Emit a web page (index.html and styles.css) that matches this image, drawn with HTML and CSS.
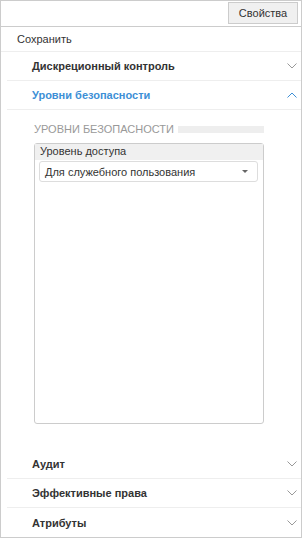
FILE: index.html
```html
<!DOCTYPE html>
<html lang="ru">
<head>
  <meta charset="UTF-8" />
  <title>Свойства</title>
  <link rel="stylesheet" href="styles.css">
</head>
<body>
  <div class="panel">
    <div class="toolbar">
      <button class="btn">Свойства</button>
    </div>
    <div class="save">Сохранить</div>

    <div class="section">
      <div class="section-head">
        <span>Дискреционный контроль</span>
        <svg class="chev" width="10" height="6" viewBox="0 0 10 6"><path d="M0.5 0.5 L5 5 L9.5 0.5" fill="none" stroke="#999" stroke-width="1"/></svg>
      </div>
    </div>

    <div class="section open">
      <div class="section-head">
        <span>Уровни безопасности</span>
        <svg class="chev" width="10" height="6" viewBox="0 0 10 6"><path d="M0.5 5.5 L5 1 L9.5 5.5" fill="none" stroke="#3d8fd6" stroke-width="1"/></svg>
      </div>
      <div class="section-body">
        <div class="caption">
          <span>Уровни безопасности</span>
          <div class="caption-bar"></div>
        </div>
        <div class="group">
          <div class="group-head">Уровень доступа</div>
          <div class="select">
            <span>Для служебного пользования</span>
            <span class="arrow"></span>
          </div>
        </div>
      </div>
    </div>

    <div class="section">
      <div class="section-head">
        <span>Аудит</span>
        <svg class="chev" width="10" height="6" viewBox="0 0 10 6"><path d="M0.5 0.5 L5 5 L9.5 0.5" fill="none" stroke="#999" stroke-width="1"/></svg>
      </div>
    </div>
    <div class="section">
      <div class="section-head">
        <span>Эффективные права</span>
        <svg class="chev" width="10" height="6" viewBox="0 0 10 6"><path d="M0.5 0.5 L5 5 L9.5 0.5" fill="none" stroke="#999" stroke-width="1"/></svg>
      </div>
    </div>
    <div class="section last">
      <div class="section-head">
        <span>Атрибуты</span>
        <svg class="chev" width="10" height="6" viewBox="0 0 10 6"><path d="M0.5 0.5 L5 5 L9.5 0.5" fill="none" stroke="#999" stroke-width="1"/></svg>
      </div>
    </div>
  </div>
</body>
</html>
```

FILE: styles.css
```css
* {
  box-sizing: border-box;
}

body {
  margin: 0;
  font-family: "Liberation Sans", Arial, sans-serif;
  font-size: 11px;
  color: #333;
}

.panel {
  width: 302px;
  height: 538px;
  border: 1px solid #ccc;
  display: flex;
  flex-direction: column;
}

.toolbar {
  height: 26px;
  border-bottom: 1px solid #ccc;
  display: flex;
  justify-content: flex-end;
  padding: 1px 3px 0 0;
}

.btn {
  height: 22px;
  width: 70px;
  border: 1px solid #ccc;
  background: #f0f0f0;
  font-family: inherit;
  font-size: 11px;
  color: #333;
  padding: 0;
}

.save {
  height: 25px;
  line-height: 24px;
  padding-left: 16px;
  border-bottom: 1px solid #eee;
}

.section-head {
  height: 29px;
  margin-left: 6px;
  padding: 0 4px 0 25px;
  display: flex;
  align-items: center;
  justify-content: space-between;
  font-weight: bold;
  border-bottom: 1px solid #eee;
}

.section.last .section-head {
  border-bottom: none;
}

.open .section-head {
  color: #3d8fd6;
}

.section.open {
  flex: 1;
  display: flex;
  flex-direction: column;
}

.section-body {
  flex: 1;
  padding: 12px 37px 26px 33px;
  display: flex;
  flex-direction: column;
}

.caption {
  display: flex;
  align-items: center;
  color: #999;
  text-transform: uppercase;
  font-size: 11px;
  height: 14px;
  margin-bottom: 7px;
}

.caption-bar {
  flex: 1;
  height: 7px;
  margin-left: 4px;
  background: #eee;
}

.group {
  flex: 1;
  border: 1px solid #ccc;
  border-radius: 3px;
}

.group-head {
  background: #f0f0f0;
  height: 16px;
  line-height: 15px;
  padding-left: 5px;
  margin-bottom: 1px;
}

.select {
  height: 21px;
  margin: 0 5px 0 4px;
  border: 1px solid #ddd;
  border-radius: 3px;
  display: flex;
  align-items: center;
  justify-content: space-between;
  padding: 0 9px 0 5px;
}

.arrow {
  width: 0;
  height: 0;
  border-left: 3.5px solid transparent;
  border-right: 3.5px solid transparent;
  border-top: 3.5px solid #666;
}
```
